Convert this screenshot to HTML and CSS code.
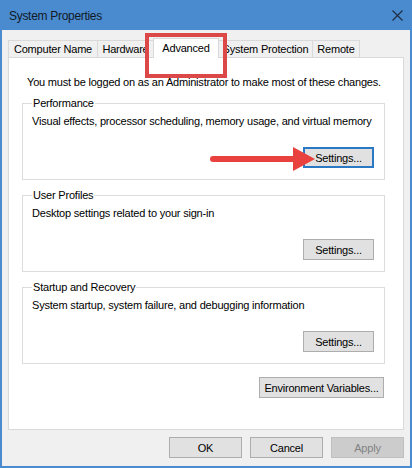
FILE: index.html
```html
<!DOCTYPE html>
<html>
<head>
<meta charset="utf-8">
<link rel="stylesheet" href="styles.css">
</head>
<body>
<div class="window">
  <div class="titlebar">
    <span class="title">System Properties</span>
    <svg class="close" width="11" height="11" viewBox="0 0 11 11"><path d="M0.5 0.5 L10.5 10.5 M10.5 0.5 L0.5 10.5" stroke="#1e2b3c" stroke-width="1.1" fill="none"/></svg>
  </div>
  <div class="body">
    <div class="tabs">
      <div class="tab tab-cn">Computer Name</div>
      <div class="tab tab-hw">Hardware</div>
      <div class="tab tab-adv active">Advanced</div>
      <div class="tab tab-sp">System Protection</div>
      <div class="tab tab-rm">Remote</div>
      <div class="highlight"></div>
    </div>
    <div class="panel">
      <p class="note">You must be logged on as an Administrator to make most of these changes.</p>
      <fieldset class="group">
        <legend>Performance</legend>
        <p class="desc">Visual effects, processor scheduling, memory usage, and virtual memory</p>
        <div class="row">
          <button class="btn focused">Settings...</button>
          <svg class="arrow" width="106" height="26" viewBox="0 0 106 26"><rect x="0" y="10" width="88" height="6" rx="3" fill="#e8413e"/><polygon points="83,1 105,13 83,25" fill="#e8413e"/></svg>
        </div>
      </fieldset>
      <fieldset class="group">
        <legend>User Profiles</legend>
        <p class="desc">Desktop settings related to your sign-in</p>
        <div class="row">
          <button class="btn">Settings...</button>
        </div>
      </fieldset>
      <fieldset class="group">
        <legend>Startup and Recovery</legend>
        <p class="desc">System startup, system failure, and debugging information</p>
        <div class="row">
          <button class="btn">Settings...</button>
        </div>
      </fieldset>
      <div class="row env-row">
        <button class="btn env">Environment Variables...</button>
      </div>
    </div>
    <div class="footer">
      <button class="btn">OK</button>
      <button class="btn">Cancel</button>
      <button class="btn disabled">Apply</button>
    </div>
  </div>
</div>
</body>
</html>
```
FILE: styles.css
```css
* { box-sizing: border-box; }
html, body { margin: 0; padding: 0; }
body {
  font-family: "Liberation Sans", Arial, sans-serif;
  font-size: 11px;
  letter-spacing: -0.2px;
  color: #000;
  background: #fff;
}
.window {
  width: 412px;
  height: 468px;
  display: flex;
  flex-direction: column;
  border: 2px solid #4a8bd0;
  border-top: 0;
  background: #f0f0f0;
}
.titlebar {
  height: 30px;
  margin: 0 -2px;
  background: #4a8bd0;
  display: flex;
  align-items: center;
  justify-content: space-between;
  padding: 1px 9px 0 9px;
}
.title {
  font-size: 12px;
  letter-spacing: -0.3px;
  color: #111a26;
}
.close { display: block; margin-top: -1px; }
.body {
  flex: 1;
  display: flex;
  flex-direction: column;
  padding: 8px 6px 8px 6px;
}
.tabs {
  position: relative;
  display: flex;
  align-items: flex-end;
  height: 19px;
}
.tab {
  height: 17px;
  line-height: 17px;
  border: 1px solid #d9d9d9;
  border-bottom: 0;
  margin-right: -1px;
  background: #f0f0f0;
  text-align: center;
  white-space: nowrap;
  overflow: hidden;
}
.tab-cn { width: 90px; }
.tab-hw { width: 57px; }
.tab-adv { width: 66px; }
.tab-sp { width: 95px; }
.tab-rm { width: 48px; }
.tab.active {
  position: relative;
  z-index: 1;
  height: 20px;
  margin-bottom: -1px;
  background: #fff;
  line-height: 18px;
  padding-bottom: 2px;
}
.highlight {
  position: absolute;
  left: 137px;
  top: -5px;
  width: 82px;
  height: 45px;
  border: 4px solid #dc4848;
  z-index: 2;
}
.panel {
  flex: 1;
  background: #fff;
  border: 1px solid #d9d9d9;
  padding: 16px 18px 0 13px;
}
.note {
  margin: 0 0 5px 5px;
  line-height: 16px;
  white-space: nowrap;
}
.group {
  margin: 0 0 7px 0;
  border: 1px solid #dcdcdc;
  padding: 0 10px 11px 9px;
  min-width: 0;
}
.group legend {
  padding: 0 1px;
  line-height: 16px;
}
.desc {
  margin: 2px 0 0 0;
  line-height: 16px;
  white-space: nowrap;
}
.row {
  position: relative;
  display: flex;
  justify-content: flex-end;
  margin-top: 18px;
}
.btn {
  font-family: inherit;
  font-size: 11px;
  letter-spacing: -0.2px;
  color: #000;
  height: 21px;
  width: 71px;
  padding: 0;
  white-space: nowrap;
  background: #e1e1e1;
  border: 1px solid #adadad;
  border-radius: 0;
}
.btn.focused {
  border: 2px solid #2b78c5;
}
.arrow {
  position: absolute;
  left: 178px;
  top: -1px;
}
.env-row {
  margin-top: 13px;
  padding-right: 1px;
}
.btn.env { width: 125px; }
.footer {
  display: flex;
  justify-content: flex-end;
  gap: 8px;
  margin-top: 7px;
}
.footer .btn { width: 73px; }
.btn.disabled {
  background: #cccccc;
  border-color: #bfbfbf;
  color: #838383;
}
```
